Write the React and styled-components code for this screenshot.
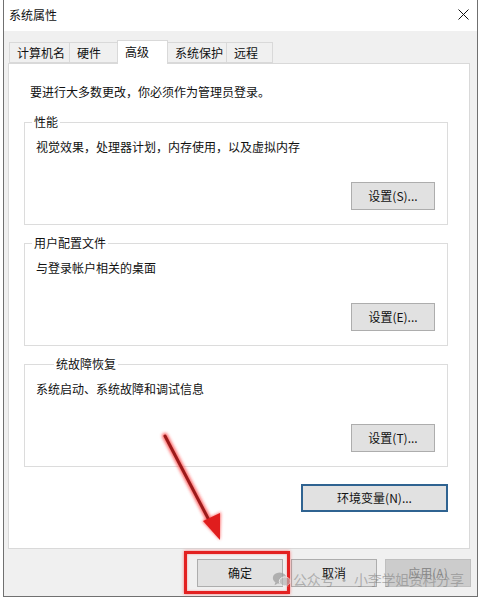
import React from "react";
import styled, { createGlobalStyle } from "styled-components";

const GlobalStyle = createGlobalStyle`
  html, body {
    margin: 0;
    padding: 0;
    background: #ffffff;
  }
  body {
    font-family: "Noto Sans CJK SC", "Liberation Sans", sans-serif;
    font-size: 12px;
    color: #1a1a1a;
  }
  * {
    box-sizing: border-box;
  }
`;

const tabs = [
  { label: "计算机名", width: 61 },
  { label: "硬件", width: 49 },
  { label: "高级", width: 51, active: true },
  { label: "系统保护", width: 60 },
  { label: "远程", width: 47 },
];

const groups = [
  { title: "性能", desc: "视觉效果，处理器计划，内存使用，以及虚拟内存", button: "设置(S)..." },
  { title: "用户配置文件", desc: "与登录帐户相关的桌面", button: "设置(E)..." },
  { title: "统故障恢复", desc: "系统启动、系统故障和调试信息", button: "设置(T)...", offset: 29 },
];

const App = () => {
  return (
    <Page>
      <GlobalStyle />
      <Window>
        <TitleBar>
          <Title>系统属性</Title>
          <CloseIcon viewBox="0 0 11 11">
            <path d="M0.5 0.5 L10.5 10.5 M10.5 0.5 L0.5 10.5" stroke="#111" strokeWidth="1" />
          </CloseIcon>
        </TitleBar>
        <Body>
          <TabStrip>
            {tabs.map((t) => (
              <Tab key={t.label} $width={t.width} $active={t.active}>
                {t.label}
              </Tab>
            ))}
          </TabStrip>
          <Panel>
            <Intro>要进行大多数更改，你必须作为管理员登录。</Intro>
            {groups.map((g) => (
              <Group key={g.title}>
                <Legend $offset={g.offset}>{g.title}</Legend>
                <Desc>{g.desc}</Desc>
                <GroupFooter>
                  <Button $width={84}>{g.button}</Button>
                </GroupFooter>
              </Group>
            ))}
            <EnvRow>
              <Button $width={147} $focused>
                环境变量(N)...
              </Button>
            </EnvRow>
          </Panel>
          <DialogButtons>
            <Button $width={86}>确定</Button>
            <Button $width={86}>取消</Button>
            <Button $width={86} disabled>
              应用(A)
            </Button>
          </DialogButtons>
        </Body>
      </Window>

      <Arrow viewBox="0 0 479 598">
        <defs>
          <filter id="glow" x="-50%" y="-50%" width="200%" height="200%">
            <feGaussianBlur stdDeviation="1.6" />
          </filter>
        </defs>
        <g filter="url(#glow)" opacity="0.7">
          <line x1="165" y1="436" x2="211" y2="524" stroke="#ff3030" strokeWidth="6" strokeLinecap="round" />
          <polygon points="220,540 202,521 221,512" fill="#ff3030" />
        </g>
        <line x1="165" y1="436" x2="211" y2="524" stroke="#9c1a1a" strokeWidth="3" strokeLinecap="round" />
        <polygon points="220,540 203,521 220,513" fill="#e01d1d" />
      </Arrow>

      <Highlight />

      <Watermark>
        <WechatIcon viewBox="0 0 20 18">
          <ellipse cx="8" cy="7.5" rx="7.2" ry="6" fill="#9a9a9a" />
          <path d="M3.5 12 L2.6 15 L6.2 13.2 Z" fill="#9a9a9a" />
          <ellipse cx="13.5" cy="11" rx="5.8" ry="4.8" fill="#b5b5b5" stroke="#f0f0f0" strokeWidth="1" />
          <path d="M16.5 14.5 L17.5 17 L14.6 15.4 Z" fill="#b5b5b5" />
        </WechatIcon>
        <MarkText>公众号</MarkText>
        <MarkDot>·</MarkDot>
        <MarkText>小李学姐资料分享</MarkText>
      </Watermark>
    </Page>
  );
};

const Page = styled.div`
  position: relative;
  width: 479px;
  height: 598px;
  overflow: hidden;
  background: #ffffff;
`;

const Window = styled.div`
  position: relative;
  margin-left: 3px;
  width: 475px;
  height: 597px;
  display: flex;
  flex-direction: column;
  background: #f0f0f0;
  border: 1px solid #707070;
  border-top: none;
`;

const TitleBar = styled.div`
  height: 31px;
  flex: 0 0 31px;
  background: #ffffff;
  display: flex;
  align-items: center;
  justify-content: space-between;
  padding: 0 8px 1px 5px;
`;

const Title = styled.span`
  font-size: 12px;
  line-height: 16px;
  color: #111;
`;

const CloseIcon = styled.svg`
  width: 11px;
  height: 11px;
  margin-top: -1px;
`;

const Body = styled.div`
  flex: 1;
  display: flex;
  flex-direction: column;
  padding: 9px 7px 0 4px;
`;

const TabStrip = styled.div`
  display: flex;
  align-items: flex-end;
  height: 23px;
  padding-left: 1px;
  position: relative;
  z-index: 1;
`;

const Tab = styled.div`
  width: ${(p) => p.$width}px;
  height: ${(p) => (p.$active ? 24 : 21)}px;
  margin-left: -1px;
  margin-bottom: ${(p) => (p.$active ? -1 : 0)}px;
  padding: ${(p) => (p.$active ? "3px" : "2px")} 0 0 7px;
  background: ${(p) => (p.$active ? "#ffffff" : "#f0f0f0")};
  border: 1px solid #d9d9d9;
  border-bottom: ${(p) => (p.$active ? "none" : "1px solid #d9d9d9")};
  font-size: 12px;
  line-height: 16px;
  color: #111;
  white-space: nowrap;
  position: relative;
  z-index: ${(p) => (p.$active ? 2 : 1)};

  &:first-child {
    margin-left: 0;
  }
`;

const Panel = styled.div`
  height: 486px;
  flex: 0 0 486px;
  background: #ffffff;
  border: 1px solid #d9d9d9;
  padding: 20px 21px 0 15px;
  display: flex;
  flex-direction: column;
`;

const Intro = styled.div`
  margin-left: 6px;
  font-size: 12px;
  line-height: 16px;
  color: #111;
  margin-bottom: 22px;
`;

const Group = styled.div`
  position: relative;
  height: 103px;
  border: 1px solid #dcdcdc;
  padding: 16px 12px 0 11px;
  display: flex;
  flex-direction: column;
  margin-bottom: 18px;

  &:nth-of-type(4) {
    margin-bottom: 17px;
  }
`;

const Legend = styled.span`
  position: absolute;
  top: -9px;
  left: ${(p) => p.$offset || 7}px;
  padding: 0 2px;
  background: #ffffff;
  font-size: 12px;
  line-height: 16px;
  color: #111;
`;

const Desc = styled.div`
  font-size: 12px;
  line-height: 16px;
  color: #111;
`;

const GroupFooter = styled.div`
  display: flex;
  justify-content: flex-end;
  margin-top: 27px;
`;

const Button = styled.button`
  width: ${(p) => p.$width}px;
  height: 28px;
  padding: 0;
  font-family: "Noto Sans CJK SC", "Liberation Sans", sans-serif;
  font-size: 12px;
  line-height: 16px;
  color: #111;
  background: #e1e1e1;
  border: ${(p) => (p.$focused ? "2px solid #2f6391" : "1px solid #adadad")};
  border-radius: 0;

  &:disabled {
    background: #cccccc;
    border-color: #bfbfbf;
    color: #8a8a8a;
  }
`;

const EnvRow = styled.div`
  display: flex;
  justify-content: flex-end;
`;

const DialogButtons = styled.div`
  display: flex;
  justify-content: flex-end;
  gap: 8px;
  margin-top: 10px;
  margin-right: -1px;
`;

const Arrow = styled.svg`
  position: absolute;
  left: 0;
  top: 0;
  width: 479px;
  height: 598px;
  pointer-events: none;
`;

const Highlight = styled.div`
  position: absolute;
  left: 184px;
  top: 551px;
  width: 106px;
  height: 43px;
  border: 3px solid #e32121;
  box-shadow: 0 0 3px rgba(255, 40, 40, 0.6), inset 0 0 2px rgba(255, 40, 40, 0.5);
  pointer-events: none;
`;

const Watermark = styled.div`
  position: absolute;
  left: 272px;
  top: 569px;
  display: flex;
  align-items: center;
  gap: 2px;
  pointer-events: none;
  color: rgba(120, 120, 120, 0.5);
`;

const WechatIcon = styled.svg`
  width: 19px;
  height: 17px;
  opacity: 0.7;
`;

const MarkText = styled.span`
  font-size: 14px;
  line-height: 20px;
  letter-spacing: -0.3px;
`;

const MarkDot = styled.span`
  font-size: 14px;
  line-height: 20px;
  margin: 0 1px;
`;

export default App;
